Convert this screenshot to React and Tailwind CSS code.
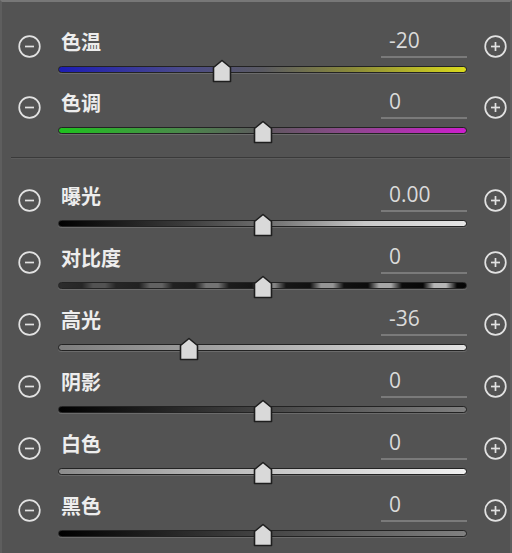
import React from "react";

const TRACK_W = 409;

function contrastBg() {
  const centers = [40, 97, 153, 210, 268, 326, 381];
  const stops = [];
  const lerp = (a, b, t) => Math.round(a + (b - a) * t);
  const g = (v) => `rgb(${v},${v},${v})`;
  stops.push(`${g(44)} 0px`);
  centers.forEach((c) => {
    const t = c / TRACK_W;
    const dark = g(lerp(42, 4, t));
    const light = g(lerp(70, 190, t));
    stops.push(`${dark} ${c - 17}px`);
    stops.push(`${light} ${c - 6}px`);
    stops.push(`${light} ${c + 6}px`);
    stops.push(`${dark} ${c + 17}px`);
  });
  stops.push(`${g(4)} ${TRACK_W}px`);
  return `linear-gradient(to right, ${stops.join(", ")})`;
}

function CircleIcon({ plus }) {
  return (
    <svg width="23" height="23" viewBox="0 0 23 23" className="block">
      <circle cx="11.5" cy="11.5" r="10.3" fill="none" stroke="#e2e2e2" strokeWidth="1.7" />
      <line x1="7" y1="11.5" x2="16" y2="11.5" stroke="#e2e2e2" strokeWidth="1.7" />
      {plus && <line x1="11.5" y1="7" x2="11.5" y2="16" stroke="#e2e2e2" strokeWidth="1.7" />}
    </svg>
  );
}

function Thumb({ v }) {
  const left = TRACK_W / 2 + (v / 100) * 204.5;
  return (
    <svg
      width="24"
      height="24"
      viewBox="0 0 24 24"
      className="absolute top-1/2 -translate-x-1/2 -translate-y-1/2 mt-[1px]"
      style={{ left }}
    >
      <polygon points="12,1.5 20.5,8.5 20.5,22.5 3.5,22.5 3.5,8.5" fill="#d9d9d9" stroke="#1e1e1e" strokeWidth="1.6" strokeLinejoin="round" />
    </svg>
  );
}

function Row({ label, value, v, trackClass, trackStyle, h }) {
  return (
    <div className={`flex items-start ${h}`}>
      <div className="w-[58px] pl-[18px] mt-[9px]">
        <CircleIcon />
      </div>
      <div className="w-[409px] flex flex-col">
        <div className="h-[32px] flex justify-between items-center">
          <span
            className="pl-[3px] text-[20px] font-bold text-[#ededed] leading-none"
            style={{ fontFamily: '"Noto Sans CJK SC", "Noto Sans", sans-serif' }}
          >
            {label}
          </span>
          <div className="w-[86px] h-full border-b-2 border-[#7a7a7a] flex items-center pl-[8px] pb-[2px]">
            <span
              className="text-[21px] text-[#dadada] leading-none"
              style={{ fontFamily: '"Open Sans", "Liberation Sans", sans-serif' }}
            >
              {value}
            </span>
          </div>
        </div>
        <div className="relative mt-[8px] h-[7px]">
          <div
            className={`h-[7px] rounded-full border border-[#232323] shadow-[0_1px_0_#6b6b6b] ${trackClass || ""}`}
            style={trackStyle}
          />
          <Thumb v={v} />
        </div>
      </div>
      <div className="pl-[17px] mt-[9px]">
        <CircleIcon plus />
      </div>
    </div>
  );
}

export default function App() {
  return (
    <div className="w-[512px] h-[553px] bg-[#535353] border-t-2 border-t-[#777777] border-l-2 border-l-[#5e5e5e] border-r-2 border-r-[#5e5e5e] overflow-hidden">
      <div className="ml-[-2px] pt-[24px]">
        <Row h="h-[61px]" label="色温" value="-20" v={-20} trackClass="bg-[linear-gradient(to_right,#1c1cb4,#4a4a8a_30%,#5a5a62_50%,#8a8a3a_72%,#dada1c)]" />
        <Row h="h-[61px]" label="色调" value="0" v={0} trackClass="bg-[linear-gradient(to_right,#1fc21f,#4a8a4a_30%,#5c585c_50%,#8a4a8a_70%,#cc1ecc)]" />
        <div className="mt-[9px] ml-[11px] h-[1px] bg-[#3a3a3a]" />
        <div className="ml-[11px] h-[1px] bg-[#5c5c5c]" />
        <div className="mt-[21px]">
          <Row h="h-[62px]" label="曝光" value="0.00" v={0} trackClass="bg-[linear-gradient(to_right,#000000,#3a3a3a_30%,#7a7a7a_55%,#c8c8c8_75%,#e6e6e6)]" />
          <Row h="h-[62px]" label="对比度" value="0" v={0} trackStyle={{ backgroundImage: contrastBg() }} />
          <Row h="h-[62px]" label="高光" value="-36" v={-36} trackClass="bg-[linear-gradient(to_right,#7e7e7e,#a8a8a8_45%,#e2e2e2)]" />
          <Row h="h-[62px]" label="阴影" value="0" v={0} trackClass="bg-[linear-gradient(to_right,#000000,#3e3e3e_45%,#808080)]" />
          <Row h="h-[62px]" label="白色" value="0" v={0} trackClass="bg-[linear-gradient(to_right,#8c8c8c,#c0c0c0_45%,#f0f0f0)]" />
          <Row h="h-[62px]" label="黑色" value="0" v={0} trackClass="bg-[linear-gradient(to_right,#000000,#3e3e3e_45%,#808080)]" />
        </div>
      </div>
    </div>
  );
}
